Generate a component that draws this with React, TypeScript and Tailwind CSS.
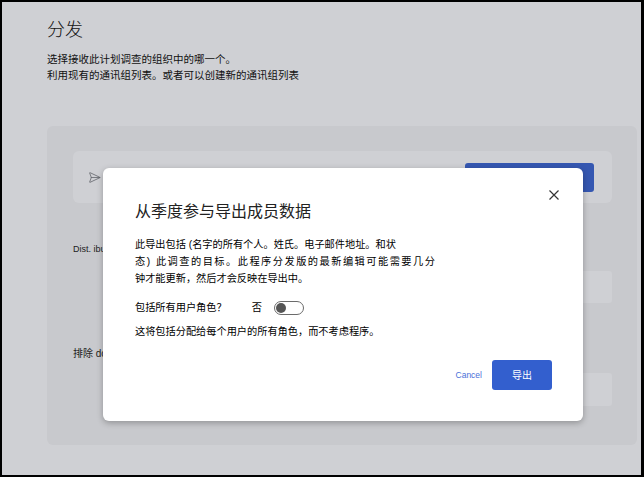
import React from "react";
import { SendHorizontal } from "lucide-react";

const cjk = "font-['Liberation_Sans','Noto_Sans_CJK_SC',sans-serif]";

const ExportDialog = () => {
  return (
    <div
      className={`absolute left-[101px] top-[166px] w-[480px] h-[253px] bg-white rounded-md shadow-[0_2px_6px_rgba(0,0,0,0.28)] pl-[32px] pr-[31px] pt-[36px] ${cjk}`}
    >
      <button className="absolute top-[22px] right-[24px] w-[10px] h-[10px] text-[#333]">
        <svg viewBox="0 0 10 10" width="10" height="10">
          <path d="M0.5 0.5 L9.5 9.5 M9.5 0.5 L0.5 9.5" stroke="currentColor" strokeWidth="1.2" fill="none" />
        </svg>
      </button>
      <h2 className="text-[16px] leading-[16px] text-[#222]">从季度参与导出成员数据</h2>
      <p className="mt-[16px] text-[10.2px] leading-[17px] text-black">
        此导出包括 (名字的所有个人。姓氏。电子邮件地址。和状
        <br />
        <span className="tracking-[1.5px]">态) 此调查的目标。此程序分发版的最新编辑可能需要几分</span>
        <br />
        钟才能更新，然后才会反映在导出中。
      </p>
      <div className="mt-[14px] flex items-center h-[14px] text-[10.2px] text-black">
        <span>包括所有用户角色？</span>
        <span className="ml-[25px]">否</span>
        <div className="ml-[12px] w-[30px] h-[14px] rounded-full border-[1.5px] border-[#6b6b6b] bg-white flex items-center px-[1px]">
          <div className="w-[10px] h-[10px] rounded-full bg-[#555]" />
        </div>
      </div>
      <p className="mt-[8px] text-[10.2px] leading-[17px] text-black">
        这将包括分配给每个用户的所有角色，而不考虑程序。
      </p>
      <div className="mt-[20px] flex justify-end items-center">
        <span className="text-[8.5px] text-[#4a6fd8] mr-[10px]">Cancel</span>
        <button className="w-[60px] h-[30px] rounded-[3px] bg-[#335fce] text-white text-[10px]">
          导出
        </button>
      </div>
    </div>
  );
};

export default function App() {
  return (
    <div
      className={`relative w-[644px] h-[477px] overflow-hidden border-2 border-r-[3px] border-black bg-[#cfd0d4] ${cjk}`}
    >
      <div className="pl-[45px] pr-[4px] pt-[19px]">
        <h1 className="text-[18px] leading-[18px] font-light text-[#151515]">分发</h1>
        <div className="mt-3 text-[10.5px] leading-[16px] text-[#111]">
          <p>选择接收此计划调查的组织中的哪一个。</p>
          <p>利用现有的通讯组列表。或者可以创建新的通讯组列表</p>
        </div>

        <section className="mt-[43px] h-[319px] rounded-md bg-[#c8c9cd] pt-[25px] pl-[26px] pr-[25px]">
          <div className="h-[52px] rounded-md bg-[#cfd0d4] flex items-center justify-between pl-[15px] pr-[18px]">
            <SendHorizontal size={13} strokeWidth={1.4} className="text-[#5d5f66]" />
            <div className="w-[129px] h-[29px] rounded-[3px] bg-[#3557b1]" />
          </div>
          <p className="mt-[41px] text-[9px] leading-[10px] text-[#222]">Dist. ibution list</p>
          <div className="mt-[17px] ml-[100px] h-[32px] rounded-[3px] bg-[#cfd0d4]" />
          <p className="mt-[46px] text-[10px] leading-[10px] text-[#222]">排除 domain</p>
          <div className="mt-[14px] ml-[100px] h-[33px] rounded-[3px] bg-[#cfd0d4]" />
        </section>
      </div>

      <ExportDialog />
    </div>
  );
}
